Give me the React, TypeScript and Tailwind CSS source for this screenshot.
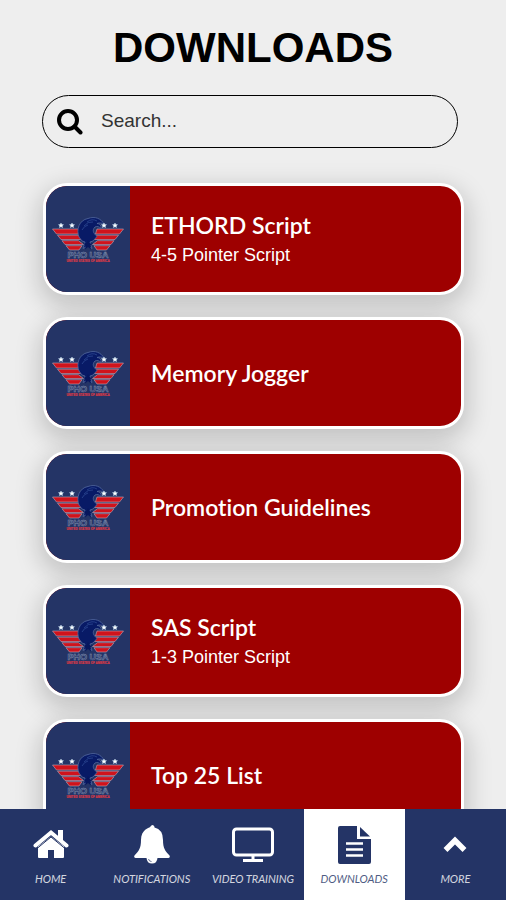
import React, { useState } from "react";

type Download = { title: string; subtitle?: string };

const downloads: Download[] = [
  { title: "ETHORD Script", subtitle: "4-5 Pointer Script" },
  { title: "Memory Jogger" },
  { title: "Promotion Guidelines" },
  { title: "SAS Script", subtitle: "1-3 Pointer Script" },
  { title: "Top 25 List" },
];

function SearchIcon() {
  return (
    <svg viewBox="0 0 26 26" className="size-[26px] shrink-0" fill="none" stroke="#000" aria-hidden="true">
      <circle cx="11" cy="11" r="9" strokeWidth="4" />
      <path d="M17.5 17.5 23.5 23.5" strokeWidth="4" strokeLinecap="round" />
    </svg>
  );
}

function HomeIcon() {
  return (
    <svg viewBox="0 0 36 32" className="h-8 w-9" fill="currentColor" aria-hidden="true">
      <path d="M18 7.5 5 17.5V28q0 1 1 1h9v-8h6v8h9q1 0 1-1V17.5Z" />
      <path d="M25 1h5v11l-5-4Z" />
      <path d="M2.500 16.500 18 3.500l15.500 13" fill="none" stroke="currentColor" strokeWidth="4" strokeLinecap="round" />
      <path d="M4 19.500 18 8l14 11.500" fill="none" stroke="#243466" strokeWidth="1" />
    </svg>
  );
}

function BellIcon() {
  return (
    <svg viewBox="0 0 36 40" className="h-10 w-9" fill="currentColor" aria-hidden="true">
      <path d="M18 0q2.500 0 2.500 2.500Q29 4.500 29 15c0 8 2 11 6.500 15.500q1 2-1 2.500h-33q-2-.5-1-2.500C5 26 7 23 7 15 7 4.500 15.500 2.500 15.500 2.500 15.500 0 18 0Z" />
      <path d="M12.500 33h11q-.5 5.500-5.500 5.500t-5.500-5.500Z" />
      <path d="M14.500 34q.5 2.500 3 2.500" fill="none" stroke="#243466" strokeWidth=".7" />
    </svg>
  );
}

function DesktopIcon() {
  return (
    <svg viewBox="0 0 42 36" className="h-9 w-[42px]" fill="none" stroke="currentColor" aria-hidden="true">
      <rect x="1.500" y="2" width="39" height="26" rx="3" strokeWidth="3" />
      <path d="M21 28v5M11 33.500h20" strokeWidth="3" />
    </svg>
  );
}

function FileIcon() {
  return (
    <svg viewBox="0 0 33 38" className="h-[38px] w-[33px]" fill="currentColor" aria-hidden="true">
      <path d="M2 0h17v13h14v23q0 2-2 2H2q-2 0-2-2V2q0-2 2-2Z" />
      <path d="M22 1 32 10.500H22Z" />
      <path d="M8 17.500h17M8 23.500h17M8 29.500h17" stroke="#fff" strokeWidth="2.500" />
    </svg>
  );
}

function ChevronUpIcon() {
  return (
    <svg viewBox="0 0 24 18" className="h-[18px] w-6" fill="none" stroke="currentColor" aria-hidden="true">
      <path d="M2.500 14 12 4.500l9.500 9.500" strokeWidth="5.500" />
    </svg>
  );
}

const tabs = [
  { label: "HOME", icon: <HomeIcon /> },
  { label: "NOTIFICATIONS", icon: <BellIcon /> },
  { label: "VIDEO TRAINING", icon: <DesktopIcon /> },
  { label: "DOWNLOADS", icon: <FileIcon /> },
  { label: "MORE", icon: <ChevronUpIcon /> },
];

function Wing() {
  return (
    <g fill="#d0131c" stroke="#b9a9bb" strokeWidth=".6">
      <path d="M.5 12H27l1.500 5H4.500Z" />
      <path d="M5.500 18.200H29l2 4.300H9Z" />
      <path d="M10 23.700h16.500l5 3.800H13Z" />
      <path d="M14 28.700h16l-3 4.300H17.500Z" />
    </g>
  );
}

function EagleLogo() {
  return (
    <svg viewBox="0 0 72 48" className="h-12 w-[72px]" aria-hidden="true">
      <Wing />
      <g transform="translate(72 0) scale(-1 1)">
        <Wing />
      </g>
      <path
        d="M27 20c-3-7 0-17 9-18.500 7-2.500 13 0 16 5.500-2-1-5-1.500-7-.5 3 0 4.500 2 4 5-2-2-4-2.500-6-1.500-3 3-2 6 2 9.500l-4 4.500-3 1 2 6.500-4-2.500-5 2.500 2-6.500-3-1Z"
        fill="#081a66"
        stroke="#54699f"
        strokeWidth=".8"
      />
      <path d="M35 5q5-4 10-1M32 9q4-5 9-4M30 13q2-4 6-5" fill="none" stroke="#2d4993" strokeWidth=".8" />
      <path d="m36 23 1.500 3.500h3.500l-3 2 1 4-3-2.500-3 2.500 1-4-3-2h3.500Z" fill="#07165c" />
      {[9, 20, 52, 63].map((x) => (
        <path key={x} d={`M${x} 6l.8 1.500 1.700.2-1.300 1.200.4 1.700-1.600-.9-1.600.9.4-1.700-1.300-1.200 1.700-.2Z`} fill="#fff" stroke="#b9d6ec" strokeWidth=".5" />
      ))}
      <text x="36" y="41" textAnchor="middle" fontSize="9" fontWeight="700" fill="#243466" stroke="#8290af" strokeWidth=".5" fontFamily="Liberation Sans, sans-serif">
        PHO USA
      </text>
      <text x="36" y="45" textAnchor="middle" fontSize="3" fontWeight="700" fill="#d03a48" stroke="#d03a48" strokeWidth=".2" fontFamily="Liberation Sans, sans-serif">
        UNITED STATES OF AMERICA
      </text>
    </svg>
  );
}

function DownloadCard({ title, subtitle }: Download) {
  return (
    <button
      type="button"
      className="flex h-28 w-full shrink-0 overflow-hidden rounded-3xl border-[3px] border-white bg-[#9e0000] text-left text-white shadow-[0_8px_24px_4px_rgba(0,0,0,0.18)]"
    >
      <span className="flex h-full w-[84px] shrink-0 items-center justify-center bg-[#243466] pt-1">
        <EagleLogo />
      </span>
      <span className="flex h-full flex-col justify-center gap-1 pl-[21px]">
        <span className="font-[Lato,sans-serif] text-[23px] leading-7 font-semibold [font-variant-ligatures:none]">{title}</span>
        {subtitle && <span className="text-lg leading-6">{subtitle}</span>}
      </span>
    </button>
  );
}

export default function App() {
  const [query, setQuery] = useState("");
  const [activeTab, setActiveTab] = useState("DOWNLOADS");

  const visible = downloads.filter((d) => d.title.toLowerCase().includes(query.toLowerCase()));

  return (
    <div className="flex h-screen flex-col bg-[#eeeeee] font-['Liberation_Sans',Arial,sans-serif]">
      <main className="min-h-0 flex-1 overflow-hidden">
        <h1 className="pt-6 text-center text-[42px] leading-[48px] font-bold text-black">DOWNLOADS</h1>

        <label className="mr-12 ml-[42px] mt-[23px] flex h-[53px] items-center gap-[18px] rounded-full border border-black pl-3.5">
          <SearchIcon />
          <input
            type="text"
            aria-label="Search"
            placeholder="Search..."
            value={query}
            onChange={(e) => setQuery(e.target.value)}
            className="min-w-0 flex-1 bg-transparent text-[19px] text-black outline-none placeholder:text-[#333333]"
          />
        </label>

        <div className="mr-[42px] ml-[43px] mt-[35px] flex flex-col gap-[22px]">
          {visible.map((d) => (
            <DownloadCard key={d.title} {...d} />
          ))}
        </div>
      </main>

      <nav className="grid h-[91px] shrink-0 grid-cols-5 bg-[#243466]">
        {tabs.map((tab) => (
          <button
            key={tab.label}
            type="button"
            onClick={() => setActiveTab(tab.label)}
            className={`flex flex-col items-center pt-4 ${activeTab === tab.label ? "bg-white text-[#243466]" : "text-white"}`}
          >
            <span className="flex h-10 items-center">{tab.icon}</span>
            <span className="mt-1.5 font-[Lato,sans-serif] text-[11px] leading-4 whitespace-nowrap italic opacity-80">
              {tab.label}
            </span>
          </button>
        ))}
      </nav>
    </div>
  );
}
